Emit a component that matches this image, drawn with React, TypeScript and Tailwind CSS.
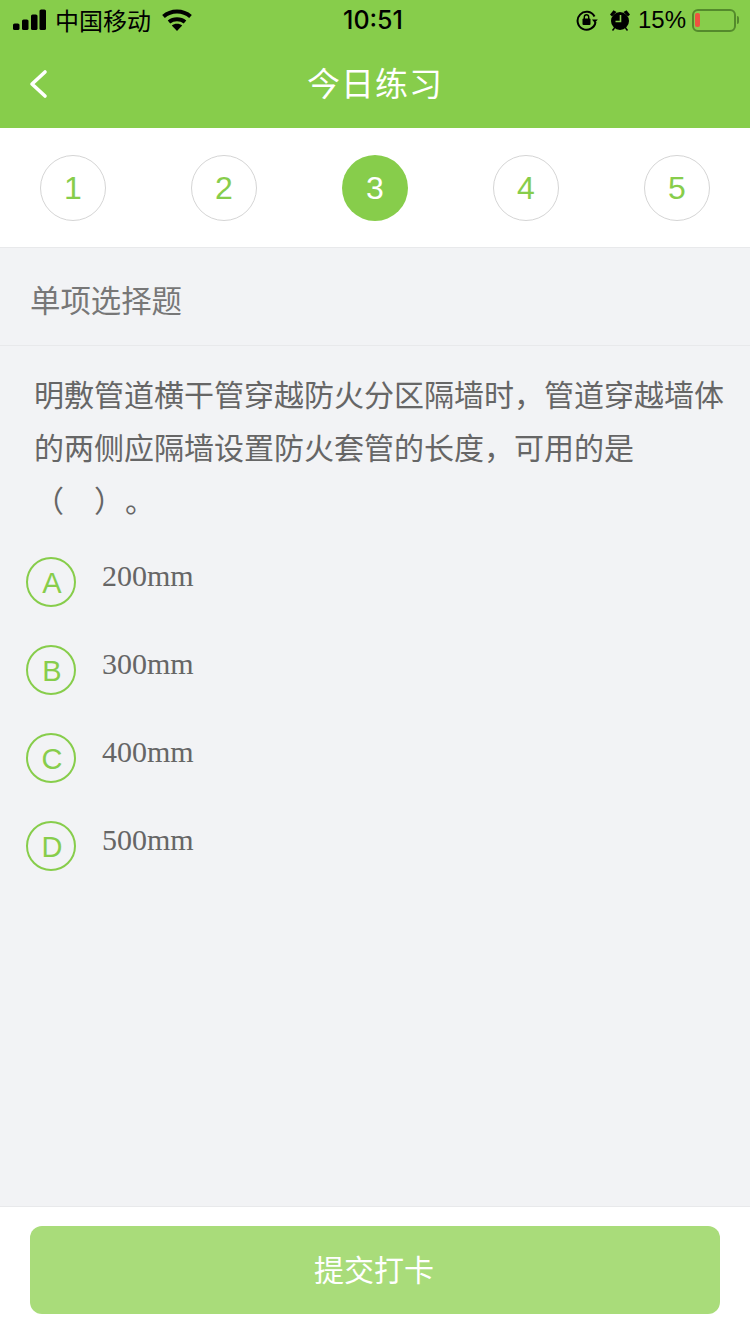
const cjk = { fontFamily: '"Noto Sans CJK SC", "Liberation Sans", sans-serif' };
const sans = { fontFamily: '"Liberation Sans", "Noto Sans CJK SC", sans-serif' };

function StatusBar() {
  return (
    <div className="relative flex h-10 items-center justify-between pl-[13px] pr-[11px] text-black">
      <div className="flex items-center">
        <svg width="34" height="22" viewBox="0 0 34 22" fill="black">
          <rect x="0" y="14.5" width="6.5" height="6.5" rx="1.6" />
          <rect x="9" y="10.5" width="6.5" height="10.5" rx="1.6" />
          <rect x="18" y="5.5" width="6.5" height="15.5" rx="1.6" />
          <rect x="26.5" y="0.5" width="6.5" height="20.5" rx="1.6" />
        </svg>
        <span className="ml-[8px] text-[24px] leading-[30px]" style={cjk}>中国移动</span>
        <svg className="ml-[11px]" width="30" height="22" viewBox="0 0 30 22" fill="none" stroke="black" strokeWidth="4">
          <path d="M1.5 7.5C9 0.8 21 0.8 28.5 7.5" />
          <path d="M7 13C11.5 9.3 18.5 9.3 23 13" />
          <path d="M15 22L9.8 16.6C12.5 14.2 17.5 14.2 20.2 16.6Z" fill="black" stroke="none" />
        </svg>
      </div>
      <div className="absolute left-[343px] top-[3px] text-[25px] font-medium leading-[34px]" style={{ fontFamily: '"Inter", sans-serif' }}>10:51</div>
      <div className="flex items-center">
        <svg width="22" height="22" viewBox="0 0 22 22" fill="none" stroke="black" strokeWidth="2">
          <path d="M18.5 7.5A9 9 0 1 0 19.5 13" />
          <path d="M21.8 10.5L18.8 14L16 10.5Z" fill="black" stroke="none" />
          <rect x="6.5" y="9.5" width="8" height="6.5" rx="1" fill="black" stroke="none" />
          <path d="M8.3 10V8a2.2 2.2 0 0 1 4.4 0v2" strokeWidth="1.4" />
        </svg>
        <svg className="ml-[11px]" width="22" height="22" viewBox="0 0 22 22">
          <circle cx="11" cy="12" r="9" fill="black" />
          <path d="M1 5.5L4.5 1.2L7.5 3L3 7.5Z M21 5.5L17.5 1.2L14.5 3L19 7.5Z" fill="black" />
          <path d="M3.5 21.5l2-2.5M18.5 21.5l-2-2.5" stroke="black" strokeWidth="1.5" />
          <path d="M11.5 6V12.5H6.5" stroke="#87cd4b" strokeWidth="1.6" fill="none" />
        </svg>
        <span className="ml-[7px] text-[24px] leading-[30px]" style={sans}>15%</span>
        <div className="ml-[6px] flex h-[23px] w-[44px] items-center rounded-[6px] border-2 border-[#548a2c] pl-[1px]">
          <div className="h-[14px] w-[5px] rounded-[2px] bg-[#ee5340]" />
        </div>
        <div className="ml-[1px] h-[8px] w-[2px] rounded-r-full bg-[#548a2c]" />
      </div>
    </div>
  );
}

function Stepper() {
  return (
    <div className="flex h-[120px] items-center justify-between border-b border-[#e8e9eb] bg-white px-[40px]">
      {[1, 2, 3, 4, 5].map((n) =>
        n === 3 ? (
          <div key={n} className="flex h-[66px] w-[66px] items-center justify-center rounded-full bg-[#87cd4b] text-[32px] text-white" style={sans}>{n}</div>
        ) : (
          <div key={n} className="flex h-[66px] w-[66px] items-center justify-center rounded-full border border-[#d5d5d5] text-[32px] text-[#87cd4b]" style={sans}>{n}</div>
        ),
      )}
    </div>
  );
}

function Option({ letter, text }: { letter: string; text: string }) {
  return (
    <div className="flex h-[88px] items-start">
      <div className="mt-[1px] flex h-[50px] w-[50px] items-center justify-center rounded-full border-2 border-[#87cd4b] pl-[2px] pt-[4px] text-[29px] text-[#87cd4b]" style={sans}>{letter}</div>
      <div className="ml-[26px] mt-[1px] text-[30px] leading-[38px] text-[#666666]" style={{ fontFamily: '"Liberation Serif", serif' }}>{text}</div>
    </div>
  );
}

export default function App() {
  return (
    <div className="flex h-[1334px] w-[750px] flex-col overflow-hidden bg-[#f2f3f5]" style={cjk}>
      <header className="h-[128px] bg-[#87cd4b]">
        <StatusBar />
        <div className="relative flex h-[88px] items-center justify-center">
          <svg className="absolute left-[28px] top-[27px]" width="22" height="34" viewBox="0 0 22 34" fill="none" stroke="white" strokeWidth="3.6" strokeLinecap="round" strokeLinejoin="round">
            <path d="M17 5L4 17L17 29" />
          </svg>
          <h1 className="mb-[4px] text-[33px] leading-[44px] tracking-[1px] text-white">今日练习</h1>
        </div>
      </header>
      <Stepper />
      <div className="flex h-[98px] items-center border-b border-[#e8e9eb] pl-[30px] pt-[6px] text-[30.4px] text-[#777777]">单项选择题</div>
      <main className="flex-1 pl-[26px]">
        <p className="mb-[30px] ml-[8px] mt-[21px] w-[700px] text-[30px] leading-[53px] text-[#666666] [text-spacing-trim:space-all]">
          明敷管道横干管穿越防火分区隔墙时，管道穿越墙体的两侧应隔墙设置防火套管的长度，可用的是<br />（ &nbsp; &nbsp;<span className="inline-block w-[3px]" />）<span className="ml-[1px]">。</span>
        </p>
        <Option letter="A" text="200mm" />
        <Option letter="B" text="300mm" />
        <Option letter="C" text="400mm" />
        <Option letter="D" text="500mm" />
      </main>
      <footer className="h-[128px] border-t border-[#e8e9eb] bg-white px-[30px] pt-[19px]">
        <button className="flex h-[88px] w-full items-center justify-center rounded-[12px] bg-[#a9dc7a] pb-[3px] pr-[2px] text-[30px] text-white" style={cjk}>提交打卡</button>
      </footer>
    </div>
  );
}
